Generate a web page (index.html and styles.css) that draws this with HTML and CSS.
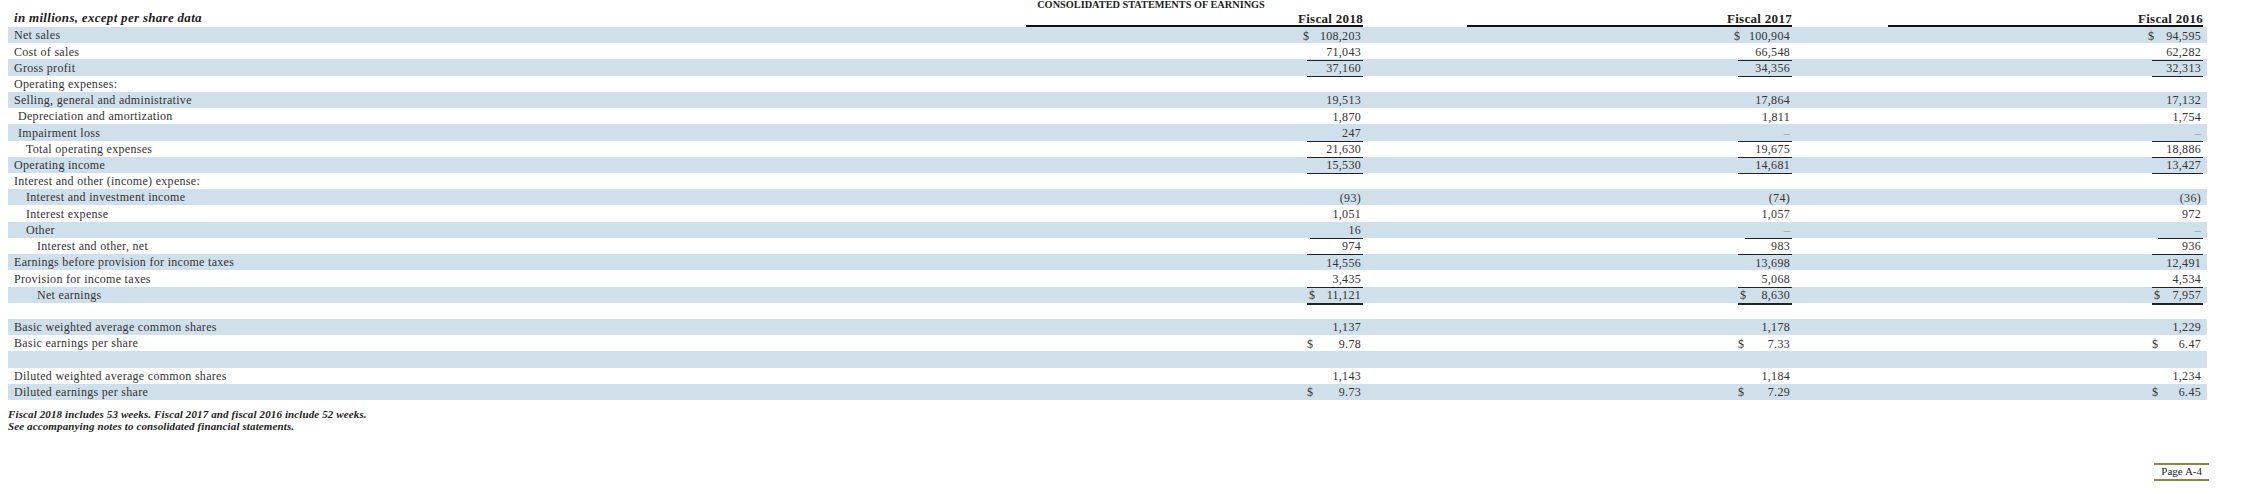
FILE: index.html
```html
<!DOCTYPE html>
<html>
<head>
<meta charset="utf-8">
<title>Consolidated Statements of Earnings</title>
<link rel="stylesheet" href="styles.css">
</head>
<body>
<div class="title">CONSOLIDATED STATEMENTS OF EARNINGS</div>
<div class="statement">
  <div class="head">
    <div class="unit">in millions, except per share data</div>
    <div class="hc c1"><span class="hl">Fiscal 2018</span></div>
    <div class="hc c2"><span class="hl">Fiscal 2017</span></div>
    <div class="hc c3"><span class="hl">Fiscal 2016</span></div>
  </div>

  <div class="rows">
  <div class="row">
    <div class="lbl i1">Net sales</div>
    <div class="cell c1"><div class="val"><span class="cur lead">$</span>108,203</div></div>
    <div class="cell c2"><div class="val"><span class="cur lead">$</span>100,904</div></div>
    <div class="cell c3"><div class="val"><span class="cur lead">$</span>94,595</div></div>
  </div>
  <div class="row">
    <div class="lbl i1">Cost of sales</div>
    <div class="cell c1"><div class="val ul">71,043</div></div>
    <div class="cell c2"><div class="val ul">66,548</div></div>
    <div class="cell c3"><div class="val ul">62,282</div></div>
  </div>
  <div class="row">
    <div class="lbl i1">Gross profit</div>
    <div class="cell c1"><div class="val ul">37,160</div></div>
    <div class="cell c2"><div class="val ul">34,356</div></div>
    <div class="cell c3"><div class="val ul">32,313</div></div>
  </div>
  <div class="row">
    <div class="lbl i1">Operating expenses:</div>
    <div class="cell c1"></div>
    <div class="cell c2"></div>
    <div class="cell c3"></div>
  </div>
  <div class="row">
    <div class="lbl i1">Selling, general and administrative</div>
    <div class="cell c1"><div class="val">19,513</div></div>
    <div class="cell c2"><div class="val">17,864</div></div>
    <div class="cell c3"><div class="val">17,132</div></div>
  </div>
  <div class="row">
    <div class="lbl i2">Depreciation and amortization</div>
    <div class="cell c1"><div class="val">1,870</div></div>
    <div class="cell c2"><div class="val">1,811</div></div>
    <div class="cell c3"><div class="val">1,754</div></div>
  </div>
  <div class="row">
    <div class="lbl i2">Impairment loss</div>
    <div class="cell c1"><div class="val ul">247</div></div>
    <div class="cell c2"><div class="val ul"><span class="nil">–</span></div></div>
    <div class="cell c3"><div class="val ul"><span class="nil">–</span></div></div>
  </div>
  <div class="row">
    <div class="lbl i3">Total operating expenses</div>
    <div class="cell c1"><div class="val ul">21,630</div></div>
    <div class="cell c2"><div class="val ul">19,675</div></div>
    <div class="cell c3"><div class="val ul">18,886</div></div>
  </div>
  <div class="row">
    <div class="lbl i1">Operating income</div>
    <div class="cell c1"><div class="val ul">15,530</div></div>
    <div class="cell c2"><div class="val ul">14,681</div></div>
    <div class="cell c3"><div class="val ul">13,427</div></div>
  </div>
  <div class="row">
    <div class="lbl i1">Interest and other (income) expense:</div>
    <div class="cell c1"></div>
    <div class="cell c2"></div>
    <div class="cell c3"></div>
  </div>
  <div class="row">
    <div class="lbl i3">Interest and investment income</div>
    <div class="cell c1"><div class="val">(93)</div></div>
    <div class="cell c2"><div class="val">(74)</div></div>
    <div class="cell c3"><div class="val">(36)</div></div>
  </div>
  <div class="row">
    <div class="lbl i3">Interest expense</div>
    <div class="cell c1"><div class="val">1,051</div></div>
    <div class="cell c2"><div class="val">1,057</div></div>
    <div class="cell c3"><div class="val">972</div></div>
  </div>
  <div class="row">
    <div class="lbl i3">Other</div>
    <div class="cell c1"><div class="val ul sh">16</div></div>
    <div class="cell c2"><div class="val ul sh"><span class="nil">–</span></div></div>
    <div class="cell c3"><div class="val ul sh"><span class="nil">–</span></div></div>
  </div>
  <div class="row">
    <div class="lbl i4">Interest and other, net</div>
    <div class="cell c1"><div class="val ul">974</div></div>
    <div class="cell c2"><div class="val ul">983</div></div>
    <div class="cell c3"><div class="val ul">936</div></div>
  </div>
  <div class="row">
    <div class="lbl i1">Earnings before provision for income taxes</div>
    <div class="cell c1"><div class="val">14,556</div></div>
    <div class="cell c2"><div class="val">13,698</div></div>
    <div class="cell c3"><div class="val">12,491</div></div>
  </div>
  <div class="row">
    <div class="lbl i1">Provision for income taxes</div>
    <div class="cell c1"><div class="val ul">3,435</div></div>
    <div class="cell c2"><div class="val ul">5,068</div></div>
    <div class="cell c3"><div class="val ul">4,534</div></div>
  </div>
  <div class="row">
    <div class="lbl i4">Net earnings</div>
    <div class="cell c1"><div class="val dbl"><span class="cur tot">$</span>11,121</div></div>
    <div class="cell c2"><div class="val dbl"><span class="cur tot">$</span>8,630</div></div>
    <div class="cell c3"><div class="val dbl"><span class="cur tot">$</span>7,957</div></div>
  </div>
  <div class="row">
    <div class="lbl i1"></div>
    <div class="cell c1"></div>
    <div class="cell c2"></div>
    <div class="cell c3"></div>
  </div>
  <div class="row">
    <div class="lbl i1">Basic weighted average common shares</div>
    <div class="cell c1"><div class="val">1,137</div></div>
    <div class="cell c2"><div class="val">1,178</div></div>
    <div class="cell c3"><div class="val">1,229</div></div>
  </div>
  <div class="row">
    <div class="lbl i1">Basic earnings per share</div>
    <div class="cell c1"><div class="val"><span class="cur">$</span>9.78</div></div>
    <div class="cell c2"><div class="val"><span class="cur">$</span>7.33</div></div>
    <div class="cell c3"><div class="val"><span class="cur">$</span>6.47</div></div>
  </div>
  <div class="row">
    <div class="lbl i1"></div>
    <div class="cell c1"></div>
    <div class="cell c2"></div>
    <div class="cell c3"></div>
  </div>
  <div class="row">
    <div class="lbl i1">Diluted weighted average common shares</div>
    <div class="cell c1"><div class="val">1,143</div></div>
    <div class="cell c2"><div class="val">1,184</div></div>
    <div class="cell c3"><div class="val">1,234</div></div>
  </div>
  <div class="row">
    <div class="lbl i1">Diluted earnings per share</div>
    <div class="cell c1"><div class="val"><span class="cur">$</span>9.73</div></div>
    <div class="cell c2"><div class="val"><span class="cur">$</span>7.29</div></div>
    <div class="cell c3"><div class="val"><span class="cur">$</span>6.45</div></div>
  </div>
  </div>
</div>

<div class="notes">
  <p>Fiscal 2018 includes 53 weeks. Fiscal 2017 and fiscal 2016 include 52 weeks.</p>
  <p>See accompanying notes to consolidated financial statements.</p>
</div>

<div class="page-foot"><span class="page-no">Page A-4</span></div>
</body>
</html>
```

FILE: styles.css
```css
html, body {
  background: #ffffff;
}

body {
  margin: 0 8px;
  font-family: "Liberation Serif", "Times New Roman", serif;
  color: #333333;
}

.title {
  height: 11px;
  line-height: 9px;
  padding-left: 40px;
  text-align: center;
  font-size: 10.3px;
  font-weight: bold;
  color: #222222;
  white-space: nowrap;
}

.statement {
  width: 2199px;
}

.head,
.row {
  display: grid;
  grid-template-columns: 1018px 337px 429px 411px;
  padding-right: 4px;
}

.head {
  height: 16px;
}

.unit {
  padding-left: 6px;
  font-size: 13px;
  line-height: 14px;
  font-weight: bold;
  font-style: italic;
  letter-spacing: 0.3px;
  color: #222222;
  white-space: nowrap;
}

.hc {
  display: flex;
  justify-content: flex-end;
}

.hl {
  display: block;
  height: 16px;
  box-sizing: border-box;
  border-bottom: 2px solid #111111;
  text-align: right;
  font-size: 13px;
  line-height: 15px;
  font-weight: bold;
  letter-spacing: 0.3px;
  color: #222222;
}

.c1 .hl { width: 337px; }
.c2 .hl { width: 325px; }
.c3 .hl { width: 315px; }

.row {
  height: 16.22px;
  box-sizing: border-box;
  font-size: 12px;
  line-height: 15px;
}

.rows .row:nth-child(odd) {
  background: #cfe0ea;
}

.lbl {
  padding-top: 1.3px;
  letter-spacing: 0.3px;
  white-space: nowrap;
}

.i1 { padding-left: 6px; }
.i2 { padding-left: 10px; }
.i3 { padding-left: 18px; }
.i4 { padding-left: 29px; }

.cell {
  display: flex;
  justify-content: flex-end;
  height: 100%;
}

.val {
  display: flex;
  justify-content: flex-end;
  height: 100%;
  box-sizing: border-box;
  padding-top: 1.5px;
  padding-right: 2px;
  letter-spacing: 0.3px;
  white-space: nowrap;
}

.c1 .val { width: 56px; }
.c2 .val { width: 54px; }
.c3 .val { width: 51px; }

.c1 .val.sh { width: 53px; }
.c2 .val.sh { width: 47px; }
.c3 .val.sh { width: 45px; }

.val.ul {
  border-bottom: 1px solid #222222;
}

.val.dbl {
  border-bottom: 2.5px solid #222222;
}

.cur {
  margin-right: auto;
}

.cur.lead {
  margin-left: -4px;
}

.cur.tot {
  margin-left: 2px;
}

.nil {
  color: #999999;
}

.notes {
  margin-top: 8px;
  font-size: 11px;
  line-height: 12px;
  font-weight: bold;
  font-style: italic;
  letter-spacing: 0.12px;
  color: #222222;
}

.notes p {
  margin: 0;
  white-space: nowrap;
}

.page-foot {
  display: flex;
  justify-content: flex-end;
  margin-top: 31px;
  margin-right: 45px;
}

.page-no {
  display: block;
  height: 17.7px;
  box-sizing: border-box;
  padding: 0 7px;
  border-top: 2px solid #8b8553;
  border-bottom: 2px solid #8b8553;
  font-size: 11px;
  line-height: 13.7px;
  color: #222222;
}
```
